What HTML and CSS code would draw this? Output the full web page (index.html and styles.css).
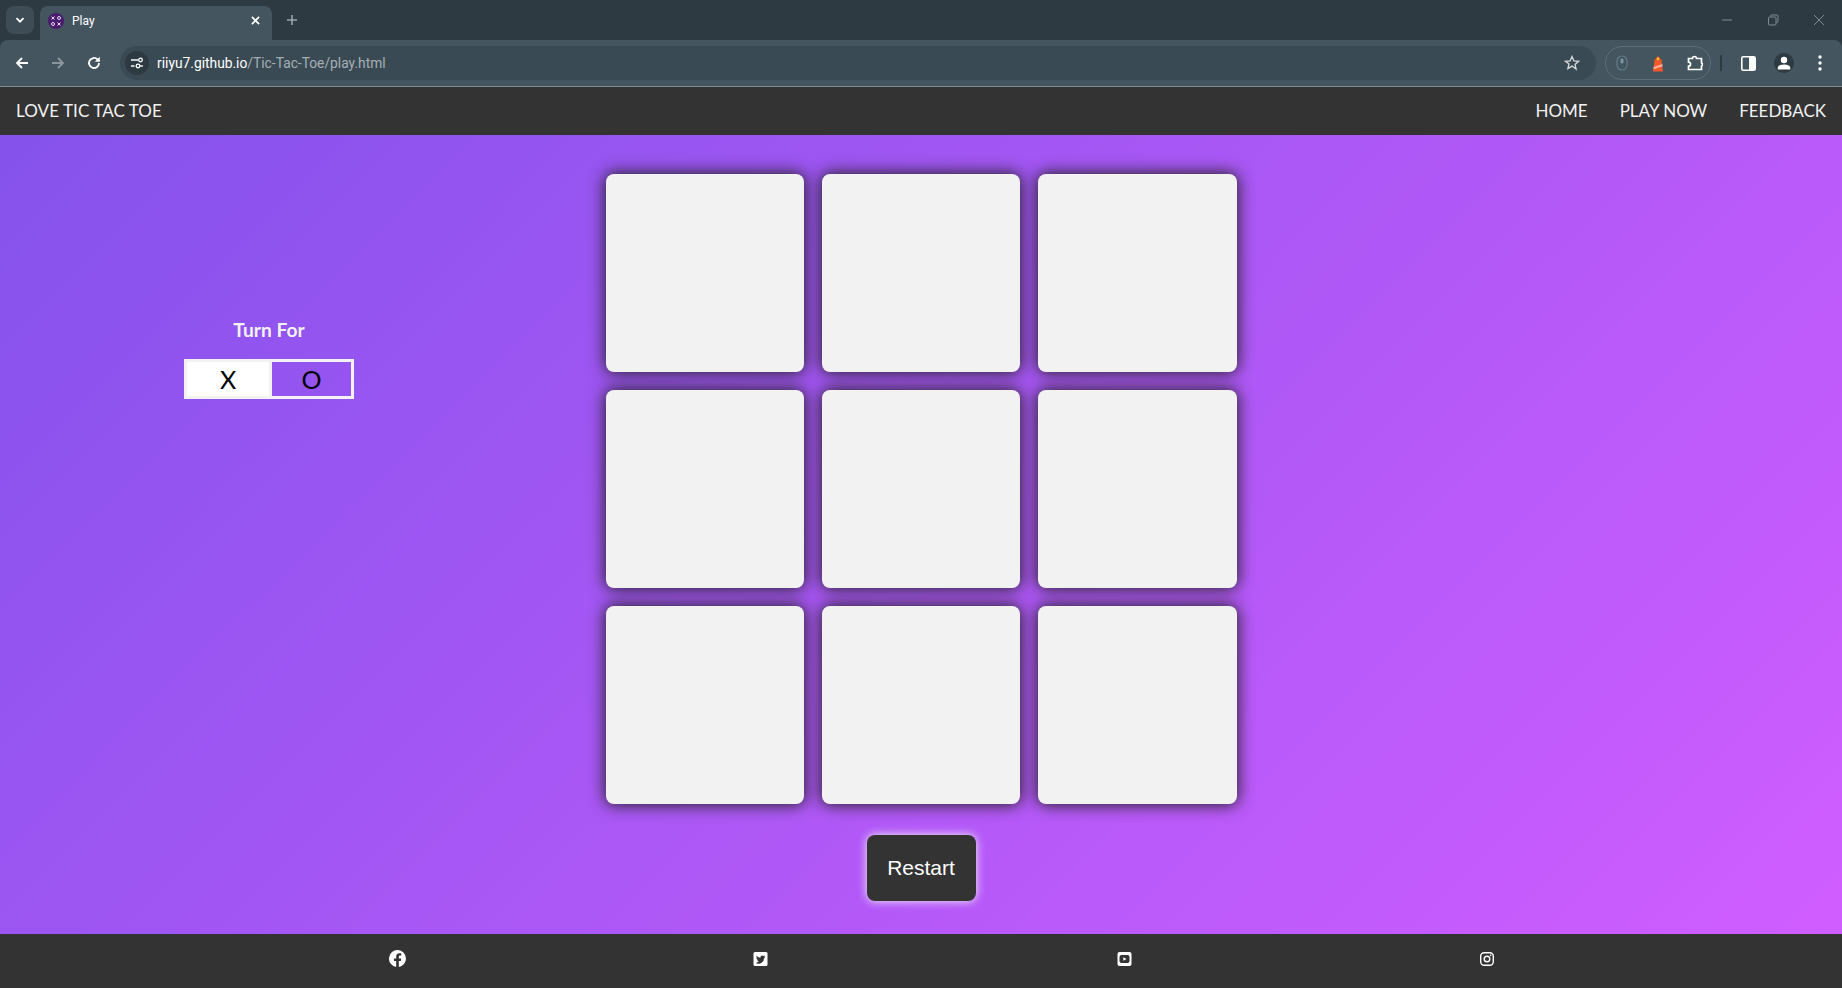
FILE: index.html
```html
<!doctype html>
<html>
<head>
<meta name="viewport" content="width=device-width, initial-scale=1">
<title>Play</title>
<link rel="stylesheet" href="styles.css">
</head>
<body>
    <div class="browser">
        <div class="tabstrip">
            <div class="tabsearch">
                <svg width="12" height="12" viewBox="0 0 12 12"><path d="M2.5 4.2 6 7.7l3.5-3.5" fill="none" stroke="#fff" stroke-width="1.8"/></svg>
            </div>
            <div class="tab">
                <svg class="favicon" width="16" height="16" viewBox="0 0 16 16">
                    <circle cx="8" cy="8" r="8" fill="#4a1a6e"/>
                    <g fill="none" stroke="#e8dcf0" stroke-width="1">
                        <path d="M3.500 3.500l3 3m0-3l-3 3M9.500 9.500l3 3m0-3l-3 3"/>
                        <circle cx="11" cy="5" r="1.500"/>
                        <circle cx="5" cy="11" r="1.500"/>
                    </g>
                </svg>
                <span class="tabtitle">Play</span>
                <svg class="tabclose" width="9" height="9" viewBox="0 0 10 10"><path d="M1 1l8 8M9 1l-8 8" stroke="#fff" stroke-width="1.900"/></svg>
            </div>
            <svg class="newtab" width="12" height="12" viewBox="0 0 12 12"><path d="M6 1v10M1 6h10" stroke="#9aa5ab" stroke-width="1.600"/></svg>
            <div class="winbtns">
                <svg width="12" height="12" viewBox="0 0 12 12"><path d="M1 6h10" stroke="#7d8a91" stroke-width="1"/></svg>
                <svg width="12" height="12" viewBox="0 0 12 12"><path d="M3.500 2.500V2a1 1 0 0 1 1-1H10a1 1 0 0 1 1 1v5.500a1 1 0 0 1-1 1h-.5" fill="none" stroke="#7d8a91"/><rect x="1.500" y="3" width="7.500" height="8" rx="1" fill="none" stroke="#7d8a91"/></svg>
                <svg width="12" height="12" viewBox="0 0 12 12"><path d="M1 1l10 10M11 1L1 11" stroke="#7d8a91" stroke-width="1"/></svg>
            </div>
        </div>
        <div class="toolbar">
            <svg class="navicon" width="16" height="16" viewBox="0 0 16 16"><path d="M14 8H3M8 3 3 8l5 5" fill="none" stroke="#fff" stroke-width="1.800"/></svg>
            <svg class="navicon" width="16" height="16" viewBox="0 0 16 16"><path d="M2 8h11M8 3l5 5-5 5" fill="none" stroke="#8b979e" stroke-width="1.800"/></svg>
            <svg class="navicon" width="16" height="16" viewBox="0 0 16 16"><path d="M13 8a5 5 0 1 1-1.500-3.600L13 6" fill="none" stroke="#fff" stroke-width="1.800"/><path d="M13.800 1.800v5h-5z" fill="#fff"/></svg>
            <div class="omnibox">
                <div class="siteinfo">
                    <svg width="14" height="14" viewBox="0 0 14 14" fill="none" stroke="#fff" stroke-width="1.300"><path d="M1 4h7M1 10h3.500"/><circle cx="10.500" cy="4" r="1.800"/><circle cx="8" cy="10" r="1.800"/><path d="M10 10h3"/></svg>
                </div>
                <div class="url">riiyu7.github.io<span>/Tic-Tac-Toe/play.html</span></div>
                <svg class="star" width="16" height="16" viewBox="0 0 16 16"><path d="M8 1.500l1.900 4.400 4.700.400-3.600 3.100 1.100 4.700L8 11.100l-4.100 2.500L5 8.900 1.400 6.300l4.700-.400z" fill="none" stroke="#d5dadd" stroke-width="1.300"/></svg>
            </div>
            <div class="extensions">
                <svg width="12" height="16" viewBox="0 0 12 16" fill="none" stroke="#5f7d8a" stroke-width="1.200"><rect x="1" y="1" width="10" height="14" rx="5"/><rect x="4.500" y="3.500" width="3" height="5" rx="1.500" fill="#7d98a3" stroke="none"/></svg>
                <svg width="14" height="17" viewBox="0 0 14 17"><path d="M3.500 6h7L12 16.500H2z" fill="#f2592a"/><path d="M2.700 12l8.600-3 .3 2.200-9.200 3z" fill="#f8b39a"/><path d="M2.500 6L7 1l4.500 5z" fill="#e8502a"/><circle cx="7" cy="4" r="1.400" fill="#f5c518"/></svg>
                <svg width="16" height="16" viewBox="0 0 16 16"><path d="M1.500 3.500h4a2 2 0 0 1 4 0h5v4.300a2 2 0 0 1 0 3.400v3.300h-13v-3.300a2 2 0 0 0 0-4z" fill="none" stroke="#fff" stroke-width="1.700"/></svg>
            </div>
            <div class="tooldiv"></div>
            <svg class="sidepanel" width="15" height="15" viewBox="0 0 15 15"><rect x=".8" y=".8" width="13.400" height="13.400" rx="1.500" fill="none" stroke="#fff" stroke-width="1.600"/><rect x="8" y="1" width="6" height="13" fill="#fff"/></svg>
            <div class="avatar">
                <svg width="14" height="14" viewBox="0 0 14 14" fill="#fff"><circle cx="7" cy="4" r="3.200"/><path d="M.8 13.500V11.500C.8 9.500 4 8.500 7 8.500s6.200 1 6.200 3v2z"/></svg>
            </div>
            <svg class="kebab" width="4" height="16" viewBox="0 0 4 16" fill="#fff"><circle cx="2" cy="2" r="1.700"/><circle cx="2" cy="8" r="1.700"/><circle cx="2" cy="14" r="1.700"/></svg>
        </div>
    </div>

    <nav class="topnav">
        <a href="#" class="brand">LOVE TIC TAC TOE</a>
        <ul>
            <li><a href="#">HOME</a></li>
            <li><a href="#">PLAY NOW</a></li>
            <li><a href="#">FEEDBACK</a></li>
        </ul>
    </nav>

    <main class="game">
        <section class="turn">
            <h3>Turn For</h3>
            <div class="turnbox">
                <span class="active">X</span>
                <span>O</span>
            </div>
        </section>
        <section class="playarea">
            <div class="board">
                <div class="cell"></div>
                <div class="cell"></div>
                <div class="cell"></div>
                <div class="cell"></div>
                <div class="cell"></div>
                <div class="cell"></div>
                <div class="cell"></div>
                <div class="cell"></div>
                <div class="cell"></div>
            </div>
            <button class="restart">Restart</button>
        </section>
    </main>

    <footer class="socials">
        <a href="#"><svg width="17" height="17" viewBox="0 0 16 16"><path fill="#fff" d="M16 8a8 8 0 1 0-9.250 7.900v-5.600H4.700V8h2.050V6.240c0-2 1.200-3.120 3-3.120.9 0 1.800.16 1.800.16v2h-1c-1 0-1.300.6-1.300 1.250V8h2.220l-.35 2.300H9.250v5.600A8 8 0 0 0 16 8z"/></svg></a>
        <a href="#"><svg width="15" height="14" viewBox="0 0 14 14"><rect width="14" height="14" rx="1.500" fill="#fff"/><path fill="#333" d="M11.500 4.300c-.3.150-.7.250-1.050.3.400-.2.650-.55.800-1-.35.200-.75.350-1.150.45a1.800 1.800 0 0 0-3.100 1.650A5.200 5.200 0 0 1 3.200 3.800a1.800 1.800 0 0 0 .55 2.400c-.3 0-.6-.1-.8-.2 0 .9.600 1.650 1.450 1.800-.25.100-.55.100-.8.050.25.700.9 1.250 1.700 1.250A3.700 3.700 0 0 1 2.500 10.900 5.200 5.200 0 0 0 10.500 6.300c.4-.3.750-.6 1-1z"/></svg></a>
        <a href="#"><svg width="15" height="14" viewBox="0 0 14 14"><rect width="14" height="14" rx="2" fill="#fff"/><rect x="2" y="3" width="10" height="8" rx="2" fill="#333"/><path d="M5.800 5.200v3.600L9 7z" fill="#fff"/></svg></a>
        <a href="#"><svg width="14" height="14" viewBox="0 0 14 14" fill="none" stroke="#fff"><rect x=".7" y=".7" width="12.600" height="12.600" rx="3.500" stroke-width="1.400"/><circle cx="7" cy="7" r="2.800" stroke-width="1.400"/><circle cx="10.600" cy="3.400" r=".8" fill="#fff" stroke="none"/></svg></a>
    </footer>
</body>
</html>
```

FILE: styles.css
```css
html, body {
    margin: 0;
    padding: 0;
    height: 100%;
}
body {
    display: flex;
    flex-direction: column;
    height: 988px;
    overflow: hidden;
    font-family: "Lato", "Liberation Sans", sans-serif;
}

/* browser chrome */
.browser {
    height: 87px;
    flex: none;
    background: #2e3a42;
    font-family: "Roboto", "Liberation Sans", sans-serif;
}
.tabstrip {
    height: 40px;
    display: flex;
    align-items: flex-start;
    padding-left: 6px;
    box-sizing: border-box;
}
.tabsearch {
    width: 28px;
    height: 28px;
    margin-top: 6px;
    border-radius: 8px;
    background: #3d4c55;
    display: flex;
    align-items: center;
    justify-content: center;
}
.tab {
    width: 232px;
    height: 34px;
    margin: 6px 0 0 6px;
    padding: 0 12px 5px 8px;
    box-sizing: border-box;
    background: #44555f;
    border-radius: 8px 8px 0 0;
    display: flex;
    align-items: center;
    color: #fff;
    font-size: 12px;
}
.tabtitle {
    margin-left: 8px;
    flex: 1;
}
.newtab {
    margin: 14px 0 0 14px;
}
.winbtns {
    margin-left: auto;
    margin-top: 14px;
    display: flex;
    gap: 34px;
    padding-right: 17px;
}
.toolbar {
    height: 47px;
    box-sizing: border-box;
    background: #44555f;
    border-bottom: 1px solid #7b8b94;
    border-radius: 8px 8px 0 0;
    padding-left: 14px;
    display: flex;
    align-items: center;
}
.navicon {
    margin-right: 20px;
}
.omnibox {
    width: 1476px;
    height: 34px;
    margin-left: -2px;
    background: #3a4a54;
    border-radius: 17px;
    display: flex;
    align-items: center;
    padding: 0 16px 0 5px;
    box-sizing: border-box;
}
.siteinfo {
    width: 24px;
    height: 24px;
    border-radius: 12px;
    background: #2e3a42;
    display: flex;
    align-items: center;
    justify-content: center;
}
.url {
    flex: 1;
    margin-left: 8px;
    color: #fff;
    font-size: 13.8px;
}
.url span {
    color: #a4afb5;
}
.extensions {
    width: 106px;
    height: 34px;
    margin-left: 9px;
    box-sizing: border-box;
    border: 1px solid #5c6e78;
    border-radius: 17px;
    display: flex;
    align-items: center;
    justify-content: space-between;
    padding: 0 7px 0 10px;
}
.tooldiv {
    width: 2px;
    height: 16px;
    margin: 0 19px 0 9px;
    background: #2e3a42;
}
.avatar {
    width: 20px;
    height: 20px;
    margin-left: 18px;
    border-radius: 10px;
    background: #2e3a42;
    display: flex;
    align-items: center;
    justify-content: center;
}
.kebab {
    margin-left: 24px;
}

/* site nav */
.topnav {
    height: 48px;
    flex: none;
    background: #333;
    display: flex;
    align-items: center;
    justify-content: space-between;
    padding: 0 16px 1px;
    box-sizing: border-box;
}
.topnav a {
    color: #f2f2f2;
    text-decoration: none;
    font-size: 17px;
}
.topnav .brand {
    letter-spacing: 0.07px;
}
.topnav ul {
    display: flex;
    gap: 32px;
    margin: 0;
    padding: 0;
    list-style: none;
}

/* game area */
.game {
    flex: 1;
    display: grid;
    grid-template-columns: 1fr 631px 1fr;
    background: linear-gradient(135deg, #8552ec, #d05dff);
}
.turn {
    width: 170px;
    margin-left: 184px;
    padding-top: 183px;
    text-align: center;
    color: #f2f2f2;
}
.turn h3 {
    margin: 0 0 18px;
    font-size: 19.200px;
    font-weight: 700;
}
.turnbox {
    height: 40px;
    box-sizing: border-box;
    border: 3px solid #f2f2f2;
    display: flex;
    color: #000;
    font-size: 25px;
    line-height: 34px;
}
.turnbox span {
    flex: 1;
}
.turnbox .active {
    flex: 0 0 85px;
    box-sizing: border-box;
    background: #fff;
    border-right: 3px solid #f2f2f2;
}
.playarea {
    padding-top: 39px;
    display: flex;
    flex-direction: column;
    align-items: center;
}
.board {
    display: grid;
    grid-template-columns: repeat(3, 198.500px);
    grid-auto-rows: 198px;
    gap: 18px 17.750px;
}
.cell {
    background: #f2f2f2;
    border-radius: 8px;
    box-shadow: 0 0 16px 1px #222;
}
.restart {
    width: 109px;
    height: 66px;
    margin-top: 31px;
    background: #333;
    color: #fff;
    border: none;
    border-radius: 8px;
    box-shadow: 0 0 10px #f2f2f2;
    font-family: "Liberation Sans", sans-serif;
    font-size: 21px;
}

/* footer */
.socials {
    height: 54px;
    flex: none;
    background: #333;
    display: grid;
    grid-template-columns: repeat(4, 1fr);
    grid-template-rows: 17px;
    justify-items: center;
    align-items: center;
    padding: 16px 173px 0 216px;
    box-sizing: border-box;
}
.socials a {
    display: block;
    line-height: 0;
}
```
